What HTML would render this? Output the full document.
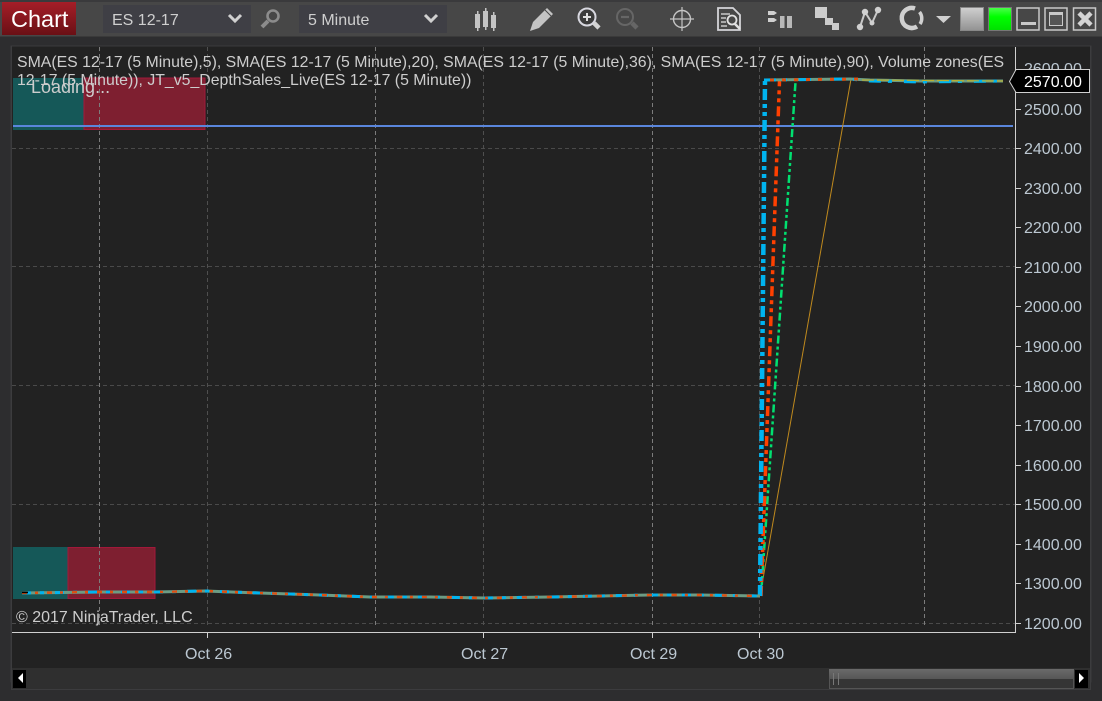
<!DOCTYPE html>
<html><head><meta charset="utf-8"><style>
html,body{margin:0;padding:0;width:1102px;height:701px;overflow:hidden;background:#2d2d2f}
svg{display:block}
text{font-family:"Liberation Sans",sans-serif}
</style></head><body>
<svg width="1102" height="701" viewBox="0 0 1102 701" xmlns="http://www.w3.org/2000/svg">
<defs>
<linearGradient id="r" x1="0" y1="0" x2="0" y2="1"><stop offset="0" stop-color="#a51e28"/><stop offset="1" stop-color="#6a1015"/></linearGradient>
<linearGradient id="g1" x1="0" y1="0" x2="0" y2="1"><stop offset="0" stop-color="#d0d0d0"/><stop offset="1" stop-color="#929292"/></linearGradient>
<linearGradient id="g2" x1="0" y1="0" x2="0" y2="1"><stop offset="0" stop-color="#4dff4d"/><stop offset=".4" stop-color="#00ff00"/><stop offset="1" stop-color="#00e000"/></linearGradient>
<linearGradient id="s" x1="0" y1="0" x2="0" y2="1"><stop offset="0" stop-color="#6a6a6a"/><stop offset="1" stop-color="#565656"/></linearGradient>
</defs>
<rect width="1102" height="701" fill="#2d2d2f"/>
<rect x="0" y="0" width="1102" height="2" fill="#3a3a3c"/>
<rect x="0" y="2" width="1102" height="34" fill="#474747"/>
<rect x="0" y="36" width="1102" height="1" fill="#3a3a3a"/>
<rect x="2" y="2" width="74" height="33" fill="url(#r)"/>
<text x="11" y="27" font-size="23.500" fill="#fff">Chart</text>
<rect x="103" y="5" width="148" height="28" fill="#3f3f45"/>
<text x="112" y="25" font-size="16" fill="#cfcfcf">ES 12-17</text>
<path d="M229 15l6 6 6-6" fill="none" stroke="#d0d0d0" stroke-width="3"/>
<circle cx="273" cy="16" r="5.500" fill="none" stroke="#8c8c8c" stroke-width="2.600"/>
<path d="M268 21l-6 6" stroke="#8c8c8c" stroke-width="4"/>
<rect x="299" y="5" width="148" height="28" fill="#3f3f45"/>
<text x="308" y="25" font-size="16" fill="#cfcfcf">5 Minute</text>
<path d="M425 15l6 6 6-6" fill="none" stroke="#d0d0d0" stroke-width="3"/>
<!-- candles -->
<g fill="#c4c4c4"><rect x="475" y="14" width="5" height="14"/><rect x="477" y="11" width="1.500" height="20"/><rect x="483" y="11" width="5" height="16"/><rect x="485" y="8" width="1.500" height="22"/><rect x="491" y="15" width="5" height="13"/><rect x="493" y="12" width="1.500" height="19"/></g>
<!-- pencil -->
<path d="M530 31l3-9 14-14 6 6-14 14z" fill="#c4c4c4"/><path d="M545 10l6 6" stroke="#474747" stroke-width="1"/>
<!-- zoom in -->
<circle cx="587" cy="17" r="8.500" fill="#3c3c3c" stroke="#d8d8e0" stroke-width="2"/>
<path d="M583 17h8M587 13v8" stroke="#e0e0e0" stroke-width="2"/>
<path d="M594 23l5 5" stroke="#d4d4d4" stroke-width="4.500"/>
<!-- zoom out -->
<circle cx="625" cy="17" r="8" fill="none" stroke="#666" stroke-width="2"/>
<path d="M621 17h8" stroke="#666" stroke-width="2.200"/>
<path d="M632 23l5 5" stroke="#666" stroke-width="4.500"/>
<!-- crosshair -->
<circle cx="682" cy="19" r="8.500" fill="none" stroke="#c4c4c4" stroke-width="1.400"/>
<path d="M670 19h24M682 7v24" stroke="#c4c4c4" stroke-width="1.200"/>
<!-- doc search -->
<path d="M718 8h15l7 7v15h-22z" fill="#474747" stroke="#d4d4d8" stroke-width="1.800"/>
<path d="M721 14h9M721 18h5M721 22h5M721 26h6" stroke="#c8c8c8" stroke-width="1.400"/>
<circle cx="732" cy="20" r="4.500" fill="none" stroke="#e0e0e0" stroke-width="1.800"/>
<path d="M735 24l5 5" stroke="#e0e0e0" stroke-width="2.500"/>
<!-- bars -->
<path d="M768 11h6l3 2-3 2h-6zM768 18h6l3 2-3 2h-6z" fill="#d0d0d0"/>
<rect x="780" y="16" width="4.500" height="12" fill="#b8b8b8"/><rect x="787" y="16" width="5" height="12" fill="#b8b8b8"/>
<!-- stairs -->
<rect x="815" y="7" width="12" height="11" fill="#ccc"/><rect x="825" y="18" width="8" height="7" fill="#ccc"/><rect x="832" y="23" width="7" height="7" fill="#ccc"/>
<!-- nodes -->
<path d="M860 27l5-15 7 11 6-13" fill="none" stroke="#c8c8c8" stroke-width="2"/>
<g fill="#d0d0d0"><circle cx="860" cy="27" r="3.200"/><circle cx="865" cy="12" r="3.200"/><circle cx="872" cy="23" r="2.500"/><circle cx="878" cy="10" r="3.200"/></g>
<!-- ring -->
<path d="M915 8.500A10 10 0 1 0 917 26.500" fill="none" stroke="#d0d0d0" stroke-width="4.500"/><path d="M919.500 12A10 10 0 0 1 920 24" fill="none" stroke="#d0d0d0" stroke-width="3.500"/>
<path d="M936 16h15l-7.500 7z" fill="#d0d0d0"/>
<rect x="960.500" y="7.500" width="23" height="23" fill="url(#g1)" stroke="#888" stroke-width="1"/>
<rect x="988.500" y="7.500" width="23" height="23" fill="url(#g2)" stroke="#777" stroke-width="1"/>
<rect x="1017" y="8" width="22" height="22" fill="#474747" stroke="#c8c8c8" stroke-width="1.500"/>
<rect x="1021" y="22" width="15" height="3" fill="#c8c8c8"/>
<rect x="1045" y="8" width="22" height="22" fill="#474747" stroke="#c8c8c8" stroke-width="1.500"/>
<rect x="1049.500" y="12.500" width="13" height="13" fill="#555" stroke="#c8c8c8" stroke-width="1"/><rect x="1049" y="12" width="14" height="3" fill="#c8c8c8"/>
<rect x="1073.500" y="8" width="22" height="22" fill="#474747" stroke="#c8c8c8" stroke-width="1.500"/>
<path d="M1079 13l12 12M1091 13l-12 12" stroke="#d4d4d4" stroke-width="4.500"/>
<!-- chart -->
<rect x="11" y="46" width="1080" height="636" fill="#222" stroke="#3a3a3c" stroke-width="1"/>
<rect x="12" y="668" width="1078" height="21" fill="#2f2f2f"/>
<rect x="1090" y="46" width="1" height="644" fill="#3c3c3e"/>
<rect x="11" y="689" width="1080" height="1" fill="#3c3c3e"/>
<rect x="11" y="46" width="1" height="644" fill="#3c3c3e"/>
<!-- zones -->
<rect x="13" y="78" width="71" height="52" fill="#155858"/>
<rect x="84" y="78" width="121" height="51.500" fill="#7e1f30" stroke="#a3183a" stroke-width="1"/>
<rect x="13" y="547" width="55" height="52" fill="#155858"/>
<rect x="68" y="547.500" width="87" height="51" fill="#7e1f30" stroke="#a3183a" stroke-width="1"/>
<!-- grid -->
<g stroke="#4a4a4a" stroke-width="1" stroke-dasharray="4 3" fill="none">
<path d="M12 148.500H1015M12 266.500H1015M12 385.500H1015M12 504.500H1015M12 623.500H1015"/>
</g>
<g stroke="#7c7c7c" stroke-width="1" stroke-dasharray="4 3" fill="none">
<path d="M99.500 47V625M375.500 47V628M652.500 47V628M924.500 47V628"/>
<path d="M207.500 47V628M483.500 47V628M759.500 47V628" stroke="#4f4f4f"/>
</g>
<!-- axis -->
<path d="M12 632.500H1015.500V47" fill="none" stroke="#d0d0d0" stroke-width="1"/>
<path d="M207.500 632v6M483.500 632v6M652.500 632v6M759.500 632v6M1016 69.500h5M1016 109.500h5M1016 148.500h5M1016 188.500h5M1016 227.500h5M1016 267.500h5M1016 306.500h5M1016 346.500h5M1016 386.500h5M1016 425.500h5M1016 465.500h5M1016 504.500h5M1016 544.500h5M1016 583.500h5M1016 623.500h5" stroke="#d0d0d0" stroke-width="1"/>
<g font-size="16" fill="#bcc8d2">
<text x="1024" y="74">2600.00</text><text x="1024" y="115">2500.00</text><text x="1024" y="154">2400.00</text><text x="1024" y="194">2300.00</text><text x="1024" y="233">2200.00</text><text x="1024" y="273">2100.00</text><text x="1024" y="312">2000.00</text><text x="1024" y="352">1900.00</text><text x="1024" y="392">1800.00</text><text x="1024" y="431">1700.00</text><text x="1024" y="471">1600.00</text><text x="1024" y="510">1500.00</text><text x="1024" y="550">1400.00</text><text x="1024" y="589">1300.00</text><text x="1024" y="629">1200.00</text>
<text x="185" y="659">Oct 26</text><text x="461" y="659">Oct 27</text><text x="630" y="659">Oct 29</text><text x="737" y="659">Oct 30</text>
</g>
<!-- blue line -->
<rect x="13" y="125" width="1000" height="2" fill="#5a86dc"/>
<!-- data lines -->
<path d="M760 596L851 79" fill="none" stroke="#c08a1e" stroke-width="1"/>
<path d="M761 596L795.500 82" fill="none" stroke="#00e070" stroke-width="2.500" stroke-dasharray="8 3 3 3 3 3"/>
<path d="M761 596L779.500 81" fill="none" stroke="#ff4000" stroke-width="3.500" stroke-dasharray="10 4 4 4 4 4"/>
<path d="M760 596L765 80" fill="none" stroke="#00b4f0" stroke-width="4.500" stroke-dasharray="11 4 4 4 4 4"/>
<path d="M760 590V596" stroke="#00b4f0" stroke-width="4"/>
<path d="M22 593L100 592L155 592L205 591L260 593L320 595L370 597L430 597L485 598L550 597L600 596L650 595L700 595L760 596" fill="none" stroke="#6c9c84" stroke-width="3"/>
<path d="M22 593L100 592L155 592L205 591L260 593L320 595L370 597L430 597L485 598L550 597L600 596L650 595L700 595L760 596" fill="none" stroke="#00b4f0" stroke-width="3" stroke-dasharray="9 9 4 11"/>
<path d="M22 593L100 592L155 592L205 591L260 593L320 595L370 597L430 597L485 598L550 597L600 596L650 595L700 595L760 596" fill="none" stroke="#e05010" stroke-width="2.500" stroke-dasharray="5 8 3 9"/>
<path d="M22 592.500h6" stroke="#000" stroke-width="1.500"/>
<path d="M764 80L850 79L870 80L920 81L1003 81" fill="none" stroke="#6c9c84" stroke-width="3"/>
<path d="M764 80L850 79L870 81L920 82L1003 81" fill="none" stroke="#00b4f0" stroke-width="3" stroke-dasharray="12 7 4 12"/>
<path d="M770 80L860 79" fill="none" stroke="#e05010" stroke-width="3" stroke-dasharray="4 8"/>
<path d="M862 80L1003 81" fill="none" stroke="#b8b030" stroke-width="1.200" stroke-dasharray="12 3"/>
<!-- text -->
<g font-size="15.850" fill="#cdcdcd">
<text x="17" y="67">SMA(ES 12-17 (5 Minute),5), SMA(ES 12-17 (5 Minute),20), SMA(ES 12-17 (5 Minute),36), SMA(ES 12-17 (5 Minute),90), Volume zones(ES</text>
<text x="17" y="85">12-17 (5 Minute)), JT_v5_DepthSales_Live(ES 12-17 (5 Minute))</text>
<text x="31" y="93" font-size="18">Loading...</text>
<text x="16" y="622" font-size="16">© 2017 NinjaTrader, LLC</text>
</g>
<!-- price tag -->
<path d="M1009.500 81.500L1016 69.500H1089.500V92.500H1016z" fill="#000" stroke="#d0d0d0" stroke-width="1"/>
<text x="1024" y="87" font-size="16" fill="#fff">2570.00</text>
<!-- scrollbar -->
<rect x="13" y="670" width="13" height="18" fill="#000"/>
<path d="M23 673v10l-5-5z" fill="#fff"/>
<rect x="829.500" y="669.500" width="244" height="19" fill="#353535" stroke="#555"/>
<rect x="829" y="669" width="245" height="10" fill="url(#s)"/>
<path d="M833.500 673v12M838.500 673v12" stroke="#777" stroke-width="1"/>
<rect x="1075" y="670" width="13" height="18" fill="#000"/>
<path d="M1079 673v10l5-5z" fill="#fff"/>
</svg>
</body></html>
